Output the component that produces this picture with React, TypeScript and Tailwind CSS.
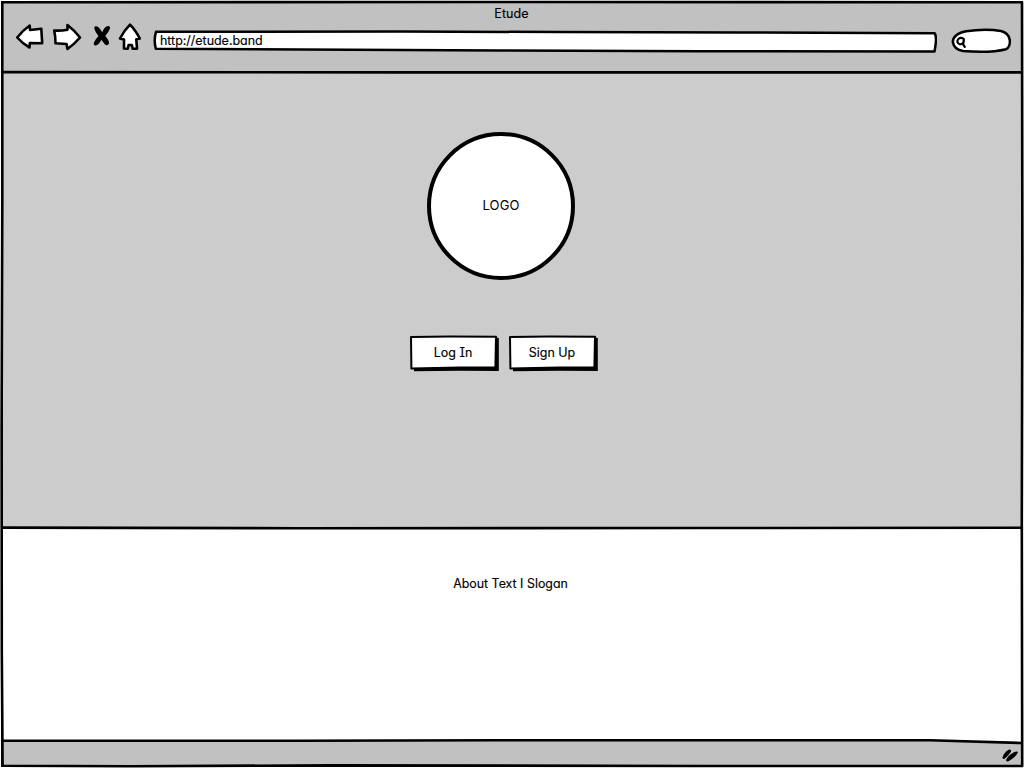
import type { ReactNode } from "react";

function BrowserIcons() {
  return (
    <svg className="-mt-[2px] block h-[34px] w-[130px] shrink-0" viewBox="14 20 130 34" fill="white" stroke="black" strokeWidth="2.6" strokeLinejoin="round" strokeLinecap="round">
      <path d="M17.2 37.5 Q22 31 29.7 25.5 L30 30 L41.3 28.8 L42.2 43.2 L29.8 43 L29.5 47.5 Q23 44 17.2 37.5Z" />
      <path d="M54.2 30.5 Q61 31 67.5 29.7 L67.5 25 Q74 30 80 37.5 Q75 43.5 67.5 49 L66.5 44 L55.5 43.3 Q55.5 36 54.2 30.5Z" />
      <path d="M130 24.6 Q135 29.5 139.8 38.5 L136.3 39.3 L137 48.7 L132.8 48.8 L131.8 45 L128.6 45 L127.7 48.8 L124 48.5 L124 39.6 L120 38.5 Q124 30.5 130 24.6Z" />
      <path stroke="none" fill="black" d="M94.3 26.8 Q97 25.3 99.3 28 L102.3 32.2 Q104.5 26.3 108 26 Q110.5 26 110 28.5 Q108.5 32.5 105.2 36 Q109.5 40.5 109 43.5 Q107.5 46.3 105 44.5 L101.3 39.8 Q99 45 95.5 45.6 Q93 45.3 94 42.5 Q95.5 39 98.5 36 Q94 30.5 94.3 26.8Z" />
    </svg>
  );
}

function AddressBar() {
  return (
    <div className="relative ml-[9px] mt-[7px] h-[24px] w-[784px] shrink-0">
      <svg className="block h-[24px] w-[784px]" viewBox="153 29 784 24" fill="white" stroke="black" strokeWidth="2.5" strokeLinejoin="round">
        <path d="M156 31.8 L400 31.4 L560 32.1 L740 32.5 L934.7 33.2 Q937.3 37 934.5 51.4 L700 51.2 L500 50.4 L300 49.5 L155.8 48.8 Q153.5 40 156 31.8Z" />
      </svg>
      <span className="absolute left-[7px] top-[4px] whitespace-nowrap text-[12.5px] leading-[16px] tracking-[-0.03px]">http://etude.band</span>
    </div>
  );
}

function SearchField() {
  return (
    <svg className="ml-[13px] mt-[5px] block h-[28px] w-[62px] shrink-0" viewBox="950 27 62 28" fill="white" stroke="black" strokeWidth="2.5" strokeLinecap="round" strokeLinejoin="round">
      <path d="M966 31.3 Q985 28.3 1001 31 Q1009 33 1009.8 40 Q1010.5 47 1006 49.2 Q990 53.2 963 51 Q954 49.5 952.8 42 Q953 34 966 31.3Z" />
      <path fill="none" strokeWidth="2.2" d="M963.8 39 Q961 36.8 958.3 39 Q955.8 42.8 960 44.3 Q964.2 44.3 963.8 39 L963.2 44.5 L964.8 46.8" />
    </svg>
  );
}

function SketchButton({ children }: { children: ReactNode }) {
  return (
    <button className="relative h-[37px] w-[90px]">
      <svg className="block h-[37px] w-[90px]" viewBox="0 0 90 37" strokeLinejoin="round">
        <path fill="black" d="M4 32 L4 36.3 L50 35.8 L88.8 36 L88.8 3 L85 2.5Z" />
        <path fill="white" stroke="black" strokeWidth="2" d="M1 2 L40 1.6 L86 1.7 L85.4 32.2 L50 32.6 L1.4 33.4Z" />
      </svg>
      <span className="absolute inset-x-0 top-[10px] pr-[3px] text-center text-[12.5px] leading-[16px]">{children}</span>
    </button>
  );
}

function SketchFrame() {
  return (
    <svg className="pointer-events-none absolute inset-0 h-[768px] w-[1024px]" viewBox="0 0 1024 768" fill="none" stroke="black" strokeWidth="2.6" strokeLinejoin="round">
      <path d="M2.3 2.2 L500 2 L1022 2.2 L1022.4 260 L1021.8 520 L1022.2 766 L700 766 L330 765.3 L130 766.3 L2.6 765.8 L1.8 650 L1.6 430 L2.3 200Z" />
      <path d="M2 72.1 L400 72.4 L1022 72.4 M2 527.6 L300 528.2 L700 528 L1022 527.8" />
    </svg>
  );
}

export default function App() {
  return (
    <div className="relative flex h-[768px] w-[1024px] flex-col bg-white p-px font-['Inter',sans-serif] text-black [font-feature-settings:'cv11'] [-webkit-text-stroke:0.15px_black]">
      <div className="flex h-[766px] flex-col border-2 border-black">
        <header className="flex h-[70px] shrink-0 flex-col border-b-2 border-black bg-[#c1c1c1]">
          <h1 className="mt-[3px] h-[16px] pr-[1px] text-center text-[12.5px] leading-[16px] tracking-[0.1px]">Etude</h1>
          <div className="flex items-start pl-[11px]">
            <BrowserIcons />
            <AddressBar />
            <SearchField />
          </div>
        </header>
        <main className="flex h-[456px] shrink-0 flex-col items-center border-b-2 border-black bg-[#cccccc] pt-[59px]">
          <div className="mr-[22px] flex size-[148px] shrink-0 items-center justify-center rounded-full border-4 border-black bg-white pb-[1px] text-[13px] tracking-[0.1px] [-webkit-text-stroke:0]">
            LOGO
          </div>
          <div className="mr-[16px] mt-[55px] flex gap-[9px] [font-feature-settings:'cv11','cv08']">
            <SketchButton>Log In</SketchButton>
            <SketchButton>Sign Up</SketchButton>
          </div>
        </main>
        <section className="flex h-[210px] shrink-0 justify-center bg-white pr-[3px] pt-[47px] text-[12.4px] leading-[16px]">
          About Text I Slogan
        </section>
        <footer className="h-[26px] shrink-0 bg-[#c1c1c1]">
          <svg className="block h-[26px] w-[1018px]" viewBox="3 739 1018 26" strokeLinecap="round">
            <path fill="white" d="M3 739H1021V742L930 740H3Z" />
            <path fill="none" stroke="black" strokeWidth="2.6" d="M3 740.7 L300 740.7 L500 740.3 L930 740.3 L1021 743" />
            <path fill="black" d="M1002.5 757.5 Q1003.5 753 1009 749.5 Q1011.5 749 1011 751.5 Q1009 755.5 1004.5 758.8 Q1002.5 759.3 1002.5 757.5Z" />
            <path fill="black" d="M1006 760.3 Q1007.5 755.5 1014 752.2 Q1017.5 750.8 1018 752.3 Q1015.5 757.5 1008.5 761.2 Q1006 762 1006 760.3Z" />
          </svg>
        </footer>
      </div>
      <SketchFrame />
    </div>
  );
}
